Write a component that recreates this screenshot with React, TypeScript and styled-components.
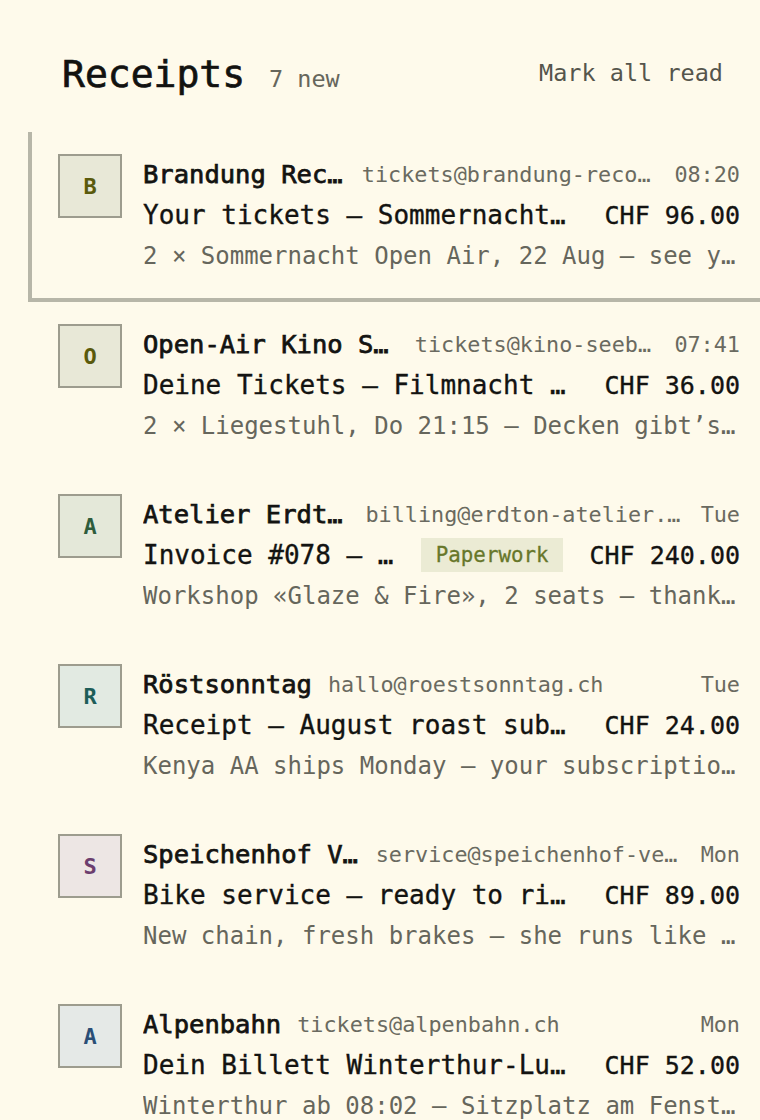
import React from "react";
import styled, { createGlobalStyle } from "styled-components";

const Global = createGlobalStyle`
  html, body { margin: 0; padding: 0; background: #fefaeb; }
  body { font-family: "DejaVu Sans Mono", "Liberation Mono", monospace; color: #151512; }
  * { box-sizing: border-box; }
`;

const Page = styled.div`
  width: 760px;
  height: 1120px;
  overflow: hidden;
  background: #fefaeb;
`;

const Header = styled.header`
  height: 132px;
  display: flex;
  align-items: center;
  padding: 16px 37px 0 62px;
`;

const TitleGroup = styled.div`
  display: flex;
  align-items: baseline;
  gap: 24px;
`;

const Title = styled.h1`
  margin: 0;
  font-size: 38px;
  font-weight: 400;
  -webkit-text-stroke: 0.7px #121210;
  line-height: 1;
  color: #121210;
`;

const Count = styled.span`
  font-size: 23.5px;
  color: #66665c;
`;

const MarkRead = styled.button`
  margin-left: auto;
  margin-top: -2px;
  border: none;
  background: none;
  padding: 0;
  font: inherit;
  font-size: 23.5px;
  color: #55554c;
  cursor: pointer;
`;

const List = styled.div`
  margin-left: 28px;
  display: flex;
  flex-direction: column;
`;

const Row = styled.div<{ $selected?: boolean }>`
  display: grid;
  grid-template-columns: 64px 1fr;
  column-gap: 21px;
  height: 170px;
  padding: 22px 20px 22px 26px;
  border-left: 4px solid ${(p) => (p.$selected ? "#b7b6a8" : "transparent")};
  border-bottom: 4px solid ${(p) => (p.$selected ? "#b7b6a8" : "transparent")};
`;

const Avatar = styled.div<{ $bg: string; $fg: string }>`
  width: 64px;
  height: 64px;
  border: 2px solid #9d9c8e;
  background: ${(p) => p.$bg};
  color: ${(p) => p.$fg};
  display: flex;
  align-items: center;
  justify-content: center;
  font-size: 22px;
  font-weight: 700;
`;

const Content = styled.div`
  min-width: 0;
  display: grid;
  grid-template-rows: 40px 42px 40px;
`;

const Line = styled.div`
  display: flex;
  align-items: center;
  min-width: 0;
  white-space: nowrap;
`;

const Truncate = styled.span`
  min-width: 0;
  overflow: hidden;
  text-overflow: ellipsis;
  white-space: nowrap;
`;

const Sender = styled(Truncate)`
  flex: 0 1 auto;
  font-size: 25.5px;
  font-weight: 400;
  -webkit-text-stroke: 0.75px #131311;
  color: #131311;
`;

const Email = styled(Truncate)`
  flex: 0 1 auto;
  margin-left: 16px;
  font-size: 21.8px;
  color: #6a6a60;
`;

const Time = styled.span`
  margin-left: auto;
  padding-left: 20px;
  flex: none;
  font-size: 21.8px;
  color: #6a6a60;
`;

const Subject = styled(Truncate)`
  flex: 1 1 auto;
  font-size: 26px;
  -webkit-text-stroke: 0.35px #131311;
  color: #131311;
`;

const Tag = styled.span`
  flex: none;
  margin-left: 26px;
  height: 34px;
  display: flex;
  align-items: center;
  padding: 0 15px;
  background: #ebebd4;
  color: #67772a;
  font-size: 20.8px;
  -webkit-text-stroke: 0.3px #67772a;
`;

const Amount = styled.span`
  flex: none;
  margin-left: 26px;
  font-size: 25px;
  -webkit-text-stroke: 0.35px #131311;
  color: #131311;
`;

const Snippet = styled(Truncate)`
  flex: 1 1 auto;
  font-size: 24px;
  color: #66665c;
`;

type Item = {
  initial: string;
  bg: string;
  fg: string;
  sender: string;
  email: string;
  time: string;
  subject: string;
  tag?: string;
  amount: string;
  snippet: string;
};

const items: Item[] = [
  {
    initial: "B",
    bg: "#e8e8d7",
    fg: "#5a5a0c",
    sender: "Brandung Records",
    email: "tickets@brandung-records.ch",
    time: "08:20",
    subject: "Your tickets — Sommernacht Open Air",
    amount: "CHF 96.00",
    snippet: "2 × Sommernacht Open Air, 22 Aug — see you at the gate",
  },
  {
    initial: "O",
    bg: "#e8e8d7",
    fg: "#5a5a0c",
    sender: "Open-Air Kino Seebach",
    email: "tickets@kino-seebach.ch",
    time: "07:41",
    subject: "Deine Tickets — Filmnacht am See",
    amount: "CHF 36.00",
    snippet: "2 × Liegestuhl, Do 21:15 — Decken gibt’s vor Ort",
  },
  {
    initial: "A",
    bg: "#e4e8d9",
    fg: "#2e5c3c",
    sender: "Atelier Erdton",
    email: "billing@erdton-atelier.ch",
    time: "Tue",
    subject: "Invoice #078 — Glaze & Fire workshop",
    tag: "Paperwork",
    amount: "CHF 240.00",
    snippet: "Workshop «Glaze & Fire», 2 seats — thank you for joining",
  },
  {
    initial: "R",
    bg: "#e2eae2",
    fg: "#1d5d58",
    sender: "Röstsonntag",
    email: "hallo@roestsonntag.ch",
    time: "Tue",
    subject: "Receipt — August roast subscription",
    amount: "CHF 24.00",
    snippet: "Kenya AA ships Monday — your subscription renews in September",
  },
  {
    initial: "S",
    bg: "#ede6e4",
    fg: "#6c3e6e",
    sender: "Speichenhof Velos",
    email: "service@speichenhof-velos.ch",
    time: "Mon",
    subject: "Bike service — ready to ride again",
    amount: "CHF 89.00",
    snippet: "New chain, fresh brakes — she runs like new again",
  },
  {
    initial: "A",
    bg: "#e5e9e7",
    fg: "#2a4e76",
    sender: "Alpenbahn",
    email: "tickets@alpenbahn.ch",
    time: "Mon",
    subject: "Dein Billett Winterthur-Luzern",
    amount: "CHF 52.00",
    snippet: "Winterthur ab 08:02 — Sitzplatz am Fenster reserviert",
  },
];

export default function App() {
  return (
    <Page>
      <Global />
      <Header>
        <TitleGroup>
          <Title>Receipts</Title>
          <Count>7 new</Count>
        </TitleGroup>
        <MarkRead>Mark all read</MarkRead>
      </Header>
      <List>
        {items.map((it, i) => (
          <Row key={i} $selected={i === 0}>
            <Avatar $bg={it.bg} $fg={it.fg}>
              {it.initial}
            </Avatar>
            <Content>
              <Line>
                <Sender>{it.sender}</Sender>
                <Email>{it.email}</Email>
                <Time>{it.time}</Time>
              </Line>
              <Line>
                <Subject>{it.subject}</Subject>
                {it.tag && <Tag>{it.tag}</Tag>}
                <Amount>{it.amount}</Amount>
              </Line>
              <Line>
                <Snippet>{it.snippet}</Snippet>
              </Line>
            </Content>
          </Row>
        ))}
      </List>
    </Page>
  );
}
